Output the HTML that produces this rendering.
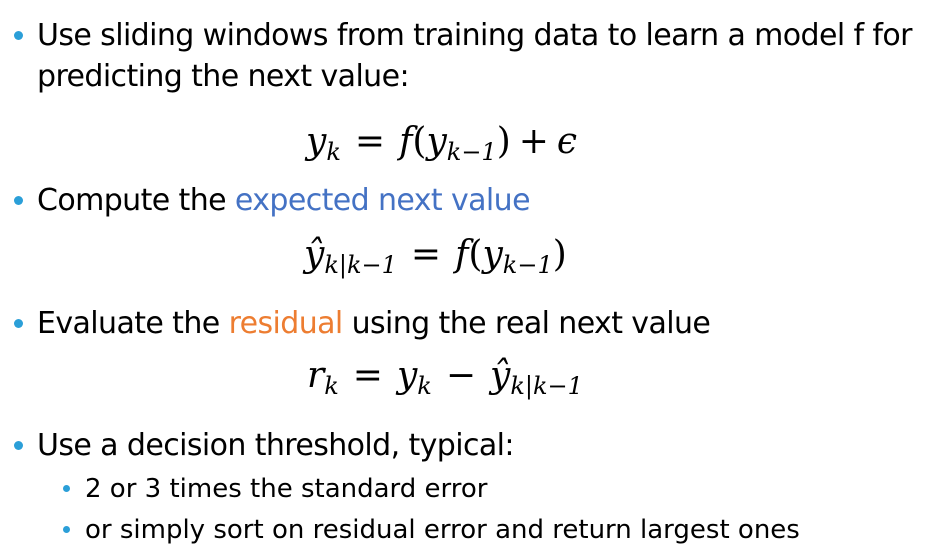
<!DOCTYPE html>
<html><head><style>
body{margin:0;width:927px;height:559px;background:#fff;position:relative;overflow:hidden;font-family:"DejaVu Sans",sans-serif;color:#000}
.t{position:absolute;white-space:nowrap;font-size:30px;line-height:1;letter-spacing:-0.6px}
.s{font-size:26px;letter-spacing:0px}
.b{position:absolute;border-radius:50%;background:#2b9fd8}
.m{position:absolute;white-space:nowrap;font-family:"DejaVu Serif","Liberation Serif",serif;font-size:36px;line-height:1}
.m i{font-style:italic}
.m .o{margin:0 14px}
.m sub{font-size:24px;vertical-align:-7px;font-style:italic}
.blue{color:#4472c4}.orange{color:#ed7d31}
</style></head><body>
<div class="b" style="left:14px;top:31px;width:9px;height:9px"></div>
<div class="t" style="left:37px;top:21px">Use sliding windows from training data to learn a model f for</div>
<div class="t" style="left:37px;top:62px">predicting the next value:</div>
<div class="m" style="left:306px;top:124px"><i>y</i><sub>k</sub><span class="o">=</span><i>f</i>(<i>y</i><sub>k−1</sub>)<span class="o" style="margin:0 8px">+</span><i>ϵ</i></div>
<div class="b" style="left:14px;top:196px;width:9px;height:9px"></div>
<div class="t" style="left:37px;top:186px">Compute the <span class="blue">expected next value</span></div>
<div class="m" style="left:304px;top:237px"><i>ŷ</i><sub>k|k−1</sub><span class="o">=</span><i>f</i>(<i>y</i><sub>k−1</sub>)</div>
<div class="b" style="left:14px;top:319px;width:9px;height:9px"></div>
<div class="t" style="left:37px;top:309px">Evaluate the <span class="orange">residual</span> using the real next value</div>
<div class="m" style="left:307px;top:358px"><i>r</i><sub>k</sub><span class="o">=</span><i>y</i><sub>k</sub><span class="o">−</span><i>ŷ</i><sub>k|k−1</sub></div>
<div class="b" style="left:14px;top:441px;width:9px;height:9px"></div>
<div class="t" style="left:37px;top:431px">Use a decision threshold, typical:</div>
<div class="b" style="left:63px;top:485px;width:7px;height:7px"></div>
<div class="t s" style="left:85px;top:476px">2 or 3 times the standard error</div>
<div class="b" style="left:63px;top:526px;width:7px;height:7px"></div>
<div class="t s" style="left:85px;top:517px">or simply sort on residual error and return largest ones</div>
</body></html>
